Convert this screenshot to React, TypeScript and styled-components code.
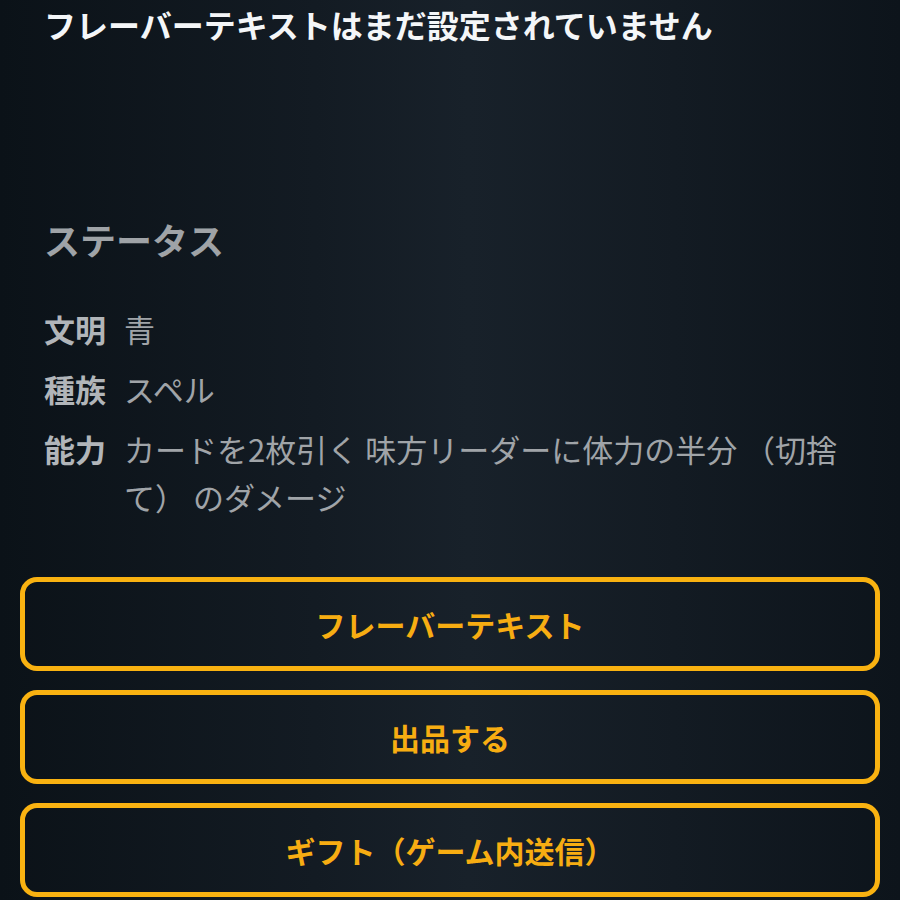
import React from "react";
import styled, { createGlobalStyle } from "styled-components";

const Global = createGlobalStyle`
  html, body {
    margin: 0;
    padding: 0;
    background: #111920;
  }
  body {
    font-family: "Noto Sans CJK JP", "Noto Sans", sans-serif;
  }
`;

const Page = styled.div`
  width: 900px;
  height: 900px;
  overflow: hidden;
  box-sizing: border-box;
  padding-top: 2px;
  background: linear-gradient(90deg, #0b1218 0%, #131b23 35%, #18212a 52%, #131b23 75%, #0d141b 100%);
  display: flex;
  flex-direction: column;
`;

const Section = styled.section`
  padding: 0 45px 0 44px;
  display: flex;
  flex-direction: column;
`;

const Title = styled.h1`
  margin: 0;
  font-size: 32px;
  line-height: 1.4;
  font-weight: 700;
  color: #f4f6f8;
`;

const Heading = styled.h2`
  margin: 167px 0 0;
  font-size: 36px;
  line-height: 1.4;
  font-weight: 700;
  color: #9fa3a7;
`;

const StatusList = styled.dl`
  margin: 41px 0 0;
  display: flex;
  flex-direction: column;
  gap: 12px;
`;

const Row = styled.div`
  display: flex;
  align-items: flex-start;
  gap: 18px;
  font-size: 31px;
  line-height: 48px;
`;

const Label = styled.dt`
  margin: 0;
  flex: none;
  font-weight: 700;
  color: #b1b5b9;
`;

const Value = styled.dd`
  margin: 0;
  flex: 1;
  font-weight: 400;
  color: #a0a4a8;
`;

const Actions = styled.div`
  margin: 56px 20px 0;
  display: flex;
  flex-direction: column;
  gap: 19px;
`;

const ActionButton = styled.button`
  height: 94px;
  box-sizing: border-box;
  border: 5px solid #f9b211;
  border-radius: 17px;
  background: transparent;
  color: #f7ad12;
  font-family: "Noto Sans CJK JP", "Noto Sans", sans-serif;
  font-size: 30px;
  font-weight: 700;
  display: flex;
  align-items: center;
  justify-content: center;
  cursor: pointer;
  padding: 0;
`;

const stats = [
  { label: "文明", value: "青" },
  { label: "種族", value: "スペル" },
  { label: "能力", value: "カードを2枚引く 味方リーダーに体力の半分 （切捨て） のダメージ" },
];

const actions = ["フレーバーテキスト", "出品する", "ギフト（ゲーム内送信）"];

export default function App() {
  return (
    <>
      <Global />
      <Page>
        <Section>
          <Title>フレーバーテキストはまだ設定されていません</Title>
          <Heading>ステータス</Heading>
          <StatusList>
            {stats.map((s) => (
              <Row key={s.label}>
                <Label>{s.label}</Label>
                <Value>{s.value}</Value>
              </Row>
            ))}
          </StatusList>
        </Section>
        <Actions>
          {actions.map((a) => (
            <ActionButton key={a}>{a}</ActionButton>
          ))}
        </Actions>
      </Page>
    </>
  );
}
